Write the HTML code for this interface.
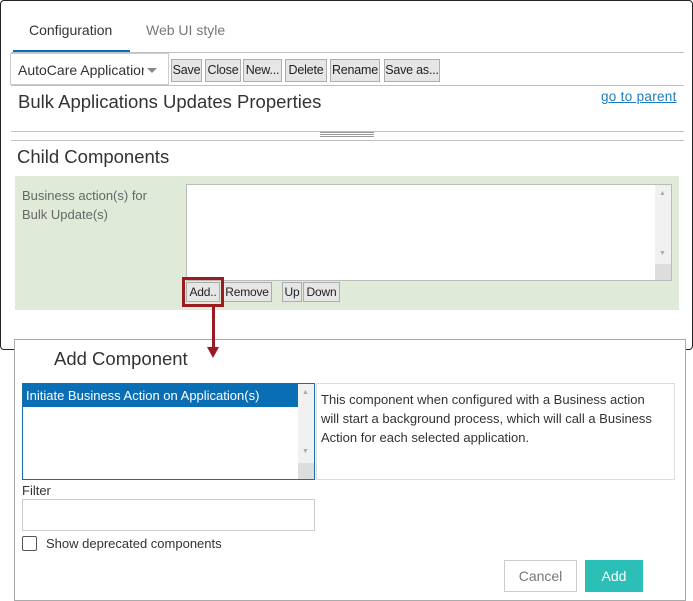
<!DOCTYPE html>
<html><head><style>
*{box-sizing:border-box;margin:0;padding:0}
body{width:693px;height:599px;background:#fff;font-family:"Liberation Sans",sans-serif;position:relative;overflow:hidden;color:#333}
.a{position:absolute}
.btn{position:absolute;top:59px;height:23px;border:1px solid #adadad;background:#e6e6e6;font-size:12.5px;color:#222;line-height:21px;text-align:center;letter-spacing:-0.2px}
.hl{position:absolute;left:11px;width:673px;height:1px;background:#c0c0c0}
.sb{position:absolute;font-size:12px;height:20px;border:1px solid #adadad;background:#e6e6e6;line-height:18px;text-align:center;color:#222;letter-spacing:-0.2px}
</style></head><body>
<div class="a" style="left:0;top:0;width:693px;height:350px;border:1.5px solid #222;border-radius:4px"></div>
<div class="a" style="left:29px;top:22px;font-size:14px;color:#333">Configuration</div>
<div class="a" style="left:146px;top:22px;font-size:14px;color:#777">Web UI style</div>
<div class="a" style="left:13px;top:50px;width:117px;height:3px;background:#0a6eb4"></div>
<div class="hl" style="top:52px"></div>
<div class="a" style="left:10px;top:53px;width:159px;height:32px;border:1px solid #ccc;background:#fff"></div>
<div class="a" style="left:18px;top:62px;font-size:14px;color:#333;width:126px;overflow:hidden;white-space:nowrap">AutoCare Application</div>
<div class="a" style="left:147px;top:68px;width:0;height:0;border-left:5px solid transparent;border-right:5px solid transparent;border-top:5px solid #888"></div>
<div class="btn" style="left:171px;width:31px">Save</div>
<div class="btn" style="left:205px;width:36px">Close</div>
<div class="btn" style="left:243px;width:39px">New...</div>
<div class="btn" style="left:285px;width:42px">Delete</div>
<div class="btn" style="left:330px;width:50px">Rename</div>
<div class="btn" style="left:384px;width:56px">Save as...</div>
<div class="hl" style="top:85px"></div>
<div class="a" style="left:18px;top:91px;font-size:18.5px;color:#333">Bulk Applications Updates Properties</div>
<div class="a" style="left:601px;top:89px;font-size:13.5px;color:#1a7cc1;text-decoration:underline;letter-spacing:0.3px">go to parent</div>
<div class="hl" style="top:131px"></div>
<div class="a" style="left:320px;top:132px;width:54px;height:6px;background:repeating-linear-gradient(#999 0 1px,#fff 1px 2px)"></div>
<div class="hl" style="top:140px"></div>
<div class="a" style="left:17px;top:146px;font-size:18.5px;color:#333">Child Components</div>
<div class="a" style="left:15px;top:176px;width:664px;height:134px;background:#dfebd8"></div>
<div class="a" style="left:22px;top:186px;font-size:13px;color:#666;line-height:19px">Business action(s) for<br>Bulk Update(s)</div>
<div class="a" style="left:186px;top:184px;width:486px;height:97px;border:1px solid #bbb;background:#fff"></div>
<div class="a" style="left:655px;top:185px;width:16px;height:95px;background:#f1f1f1"></div>
<div class="a" style="left:659px;top:190px;font-size:7px;color:#aaa">▲</div>
<div class="a" style="left:659px;top:250px;font-size:7px;color:#aaa">▼</div>
<div class="a" style="left:655px;top:264px;width:16px;height:16px;background:#ddd"></div>
<div class="sb" style="left:186px;top:282px;width:34px">Add..</div>
<div class="sb" style="left:222px;top:282px;width:50px">Remove</div>
<div class="sb" style="left:282px;top:282px;width:20px">Up</div>
<div class="sb" style="left:303px;top:282px;width:37px">Down</div>
<div class="a" style="left:182px;top:277px;width:42px;height:30px;border:3px solid #9b1b22"></div>
<div class="a" style="left:212px;top:307px;width:3px;height:42px;background:#9b1b22"></div>
<div class="a" style="left:14px;top:339px;width:672px;height:262px;border:1px solid #aaa;background:#fff"></div>
<div class="a" style="left:207px;top:347px;width:0;height:0;border-left:6px solid transparent;border-right:6px solid transparent;border-top:11px solid #9b1b22"></div>
<div class="a" style="left:212px;top:339px;width:3px;height:10px;background:#9b1b22"></div>
<div class="a" style="left:54px;top:348px;font-size:18.5px;color:#333">Add Component</div>
<div class="a" style="left:22px;top:383px;width:293px;height:97px;border:1px solid #1a6ea8;background:#fff"></div>
<div class="a" style="left:23px;top:384px;width:275px;height:23px;background:#0a6eb4;color:#fff;font-size:13px;line-height:23px;padding-left:3px">Initiate Business Action on Application(s)</div>
<div class="a" style="left:298px;top:384px;width:16px;height:95px;background:#f1f1f1"></div>
<div class="a" style="left:302px;top:389px;font-size:7px;color:#aaa">▲</div>
<div class="a" style="left:302px;top:448px;font-size:7px;color:#aaa">▼</div>
<div class="a" style="left:298px;top:463px;width:16px;height:16px;background:#ddd"></div>
<div class="a" style="left:316px;top:383px;width:359px;height:97px;border:1px solid #ddd;padding:6px 4px 5px 4px;font-size:13px;line-height:19px;color:#333"><div style="width:352px">This component when configured with a Business action<br>will start a background process, which will call a Business<br>Action for each selected application.</div></div>
<div class="a" style="left:22px;top:483px;font-size:13px;color:#333">Filter</div>
<div class="a" style="left:22px;top:499px;width:293px;height:32px;border:1px solid #ccc"></div>
<div class="a" style="left:22px;top:536px;width:15px;height:15px;border:1.5px solid #555;border-radius:2px"></div>
<div class="a" style="left:46px;top:536px;font-size:13px;color:#333">Show deprecated components</div>
<div class="a" style="left:504px;top:560px;width:73px;height:32px;border:1px solid #ccc;font-size:14px;color:#777;text-align:center;line-height:30px">Cancel</div>
<div class="a" style="left:585px;top:560px;width:58px;height:32px;background:#2bbfb8;font-size:14px;color:#fff;text-align:center;line-height:32px">Add</div>
</body></html>
